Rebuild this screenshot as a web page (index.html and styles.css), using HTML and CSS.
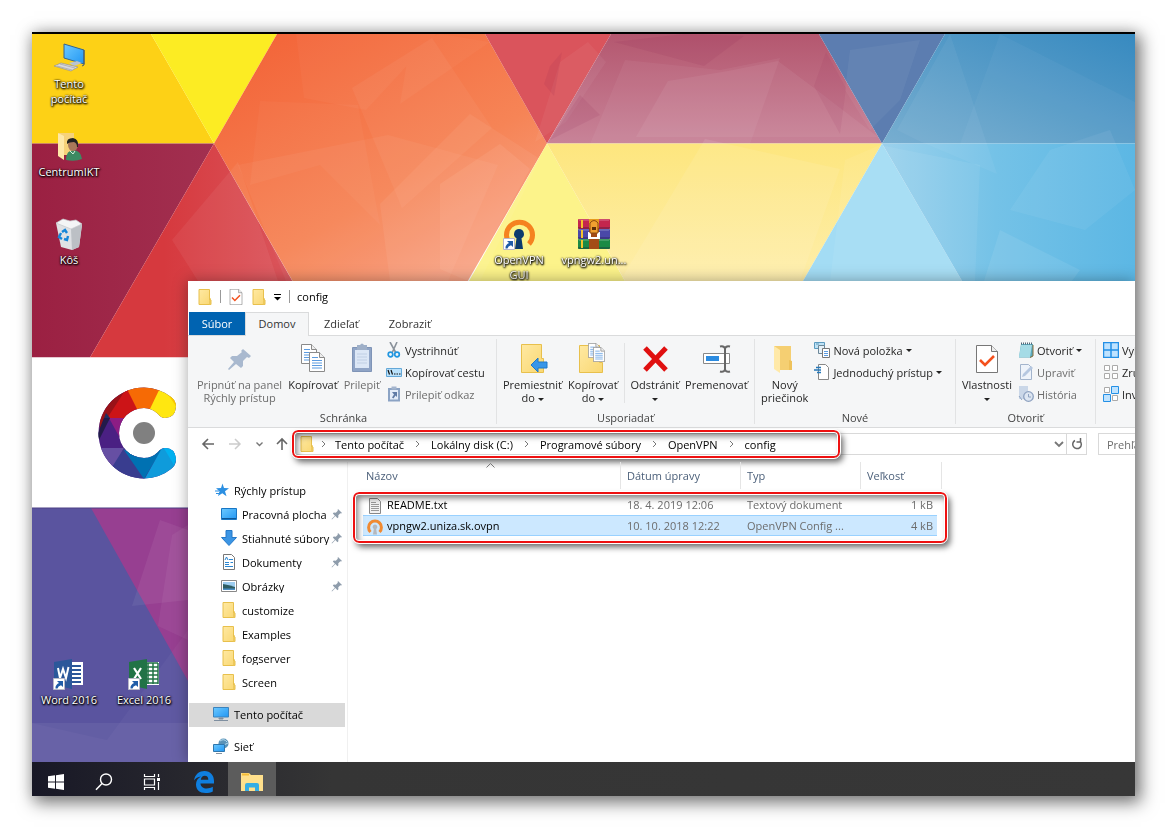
FILE: index.html
```html
<!DOCTYPE html>
<html lang="sk">
<head>
  <meta charset="UTF-8" />
  <meta name="viewport" content="width=device-width, initial-scale=1.0"/>
  <title>config</title>
  <link rel="stylesheet" href="styles.css">
</head>
<body>
  <svg class="sprite" aria-hidden="true">
    <defs>
      <linearGradient id="gFolder" x1="0" y1="0" x2="1" y2="1">
        <stop offset="0" stop-color="#ffe9a2"/><stop offset="1" stop-color="#f9d772"/>
      </linearGradient>
      <linearGradient id="gScreen" x1="0" y1="0" x2="1" y2="1">
        <stop offset="0" stop-color="#6cc9ff"/><stop offset="1" stop-color="#2196f3"/>
      </linearGradient>
    </defs>
    <symbol id="folder" viewBox="0 0 16 16">
      <path d="M2 .5h10.500v10.500h1.500v4.500H2z" fill="url(#gFolder)" stroke="#e8c04c"/>
      <path d="M12.500 15.500v-4l1-2v6z" fill="#fbe08a" stroke="#e8c04c" stroke-width=".7"/>
    </symbol>
    <symbol id="pin" viewBox="0 0 12 12">
      <path d="M7 1l4 4-1 .5-.7-.2-2 2 .1 2-1 1-2-2.200L1 11.500l-.4-.4 3.300-3.400L1.800 5.600l1-1 2 .1 2-2-.2-.8z" fill="#8e9cab"/>
    </symbol>
    <symbol id="page" viewBox="0 0 16 20">
      <path d="M.5.500h10l5 5v14H.5z" fill="#fff" stroke="#8a8a8a"/>
      <path d="M10.500.500v5h5" fill="#eee" stroke="#8a8a8a"/>
      <path d="M3 5.500h6M3 8.500h10M3 11h10M3 13.500h10M3 16h10" stroke="#5b9be0"/>
    </symbol>
    <symbol id="check" viewBox="0 0 22 28">
      <path d="M.5.500h15l6 6v21H.5z" fill="#fff" stroke="#777"/>
      <path d="M15.500.500v6h6" fill="#eee" stroke="#777"/>
      <path d="M4 15l5 5 9-9" fill="none" stroke="#f4511e" stroke-width="2.600"/>
    </symbol>
    <symbol id="shortcut" viewBox="0 0 12 12">
      <path d="M.5.500h11v11H.5z" fill="#fff" stroke="#b8b8c8"/>
      <path d="M4 3h6v6L8 7.200Q5 8 4.500 10.500H2.500Q2 7 6 5z" fill="#1f5ca8"/>
    </symbol>
    <symbol id="vpn" viewBox="0 0 32 32">
      <path d="M7 26A13 13 0 1 1 26 26" fill="none" stroke="#f58220" stroke-width="5"/>
      <path d="M16 11a5 5 0 0 1 2.500 9.300L20 31h-8l1.500-10.700A5 5 0 0 1 16 11z" fill="#0c3c6e"/>
    </symbol>
    <symbol id="pc" viewBox="0 0 16 14">
      <path d="M.5.500h15v9.500H.5z" fill="url(#gScreen)" stroke="#3b83bd"/>
      <path d="M6 11h4v1H6zM1 13.500h14" stroke="#7f8fa0" fill="#7f8fa0"/>
    </symbol>
  </svg>

  <main class="desktop">
    <div class="screen">
      <svg class="wallpaper" viewBox="32 34 1103 728" preserveAspectRatio="xMinYMin slice" aria-hidden="true">
        <defs>
          <linearGradient id="gOrange" x1=".2" y1="0" x2=".8" y2="1">
            <stop offset="0" stop-color="#f3663a"/><stop offset=".5" stop-color="#f68456"/><stop offset="1" stop-color="#f9b09a"/>
          </linearGradient>
          <linearGradient id="gRed" x1="0" x2="1"><stop offset=".3" stop-color="#d6393e"/><stop offset="1" stop-color="#dc5f66"/></linearGradient>
          <linearGradient id="gCrimson" x1="0" x2="1"><stop offset="0" stop-color="#9b2042"/><stop offset="1" stop-color="#a23050"/></linearGradient>
          <linearGradient id="gMauve" x1="0" y1="0" x2="0" y2="1"><stop offset="0" stop-color="#b4576f"/><stop offset="1" stop-color="#c88398"/></linearGradient>
          <linearGradient id="gSky" x1="0" y1="0" x2="1" y2="0"><stop offset="0" stop-color="#9bd1ec"/><stop offset=".45" stop-color="#74c2e7"/><stop offset="1" stop-color="#5cb7e4"/></linearGradient>
          <linearGradient id="gBlue" x1="0" y1="1" x2="1" y2="0"><stop offset="0" stop-color="#78aed0"/><stop offset="1" stop-color="#378ac0"/></linearGradient>
          <linearGradient id="gPale" x1="0" y1="0" x2="0" y2="1"><stop offset="0" stop-color="#fde67e"/><stop offset="1" stop-color="#feeeaa"/></linearGradient>
          <clipPath id="cRing"><path d="M144 387.500A45.500 45.500 0 0 0 144 478.500Q160 478 171 469A12 12 0 0 0 176 459Q175 448 165 448Q161 448 158 452Q152 458 144 458A25 25 0 0 1 144 408Q152 408 158 414Q161 418 165 418Q175 418 176 407A12 12 0 0 0 171 397Q160 388 144 387.500z"/></clipPath>
        </defs>
        <path d="M32 34h119l63 109.500H32z" fill="#fdd116"/>
        <path d="M151 34h126l-63 109.500z" fill="#fcec23"/>
        <path d="M277 34h208l62 109.500L424 357H336L214 143.500z" fill="url(#gOrange)"/>
        <path d="M32 143.500h182L90 357.500H32z" fill="url(#gCrimson)"/>
        <path d="M214 143.500L336 357.500H90z" fill="url(#gRed)"/>
        <path d="M485 34h126l-64 109.500z" fill="#da545c"/>
        <path d="M611 34h208l63 109.500H547z" fill="url(#gMauve)"/>
        <path d="M819 34h126l-63 109.500z" fill="#5c7db0"/>
        <path d="M945 34h190v109.500H882z" fill="url(#gBlue)"/>
        <path d="M547 143.500L625 281H469z" fill="#fcf38a"/>
        <path d="M547 143.500h335L803 281H625z" fill="url(#gPale)"/>
        <path d="M882 143.500L962 281H803z" fill="#a3dcf4"/>
        <path d="M882 143.500h253V281H962z" fill="url(#gSky)"/>
        <!-- translucent facets -->
        <g fill="#fff" opacity=".65">
          <path d="M296 34h140l-70 76-62-12zM440 34l50 8-90 62 10-60z" opacity=".05"/>
          <path d="M260 101l98 4 22 120-60-60-70 20z" opacity=".05"/>
          <path d="M352 88l80-50 60 90-90 80z" opacity=".07"/>
          <path d="M238 165l150-30 110 30-50 116H286z" opacity=".07"/>
          <path d="M380 204l90-90 70 45-60 122h-90z" opacity=".09"/>
          <path d="M172 240l66-78 40 119h-80z" opacity=".09"/>
          <path d="M440 184l60-40 30 25-62 112-28-12z" opacity=".1"/>
          <path d="M560 62l28-20 18 20-40 60-31 20z" opacity=".08"/>
          <path d="M625 60l95 10 60-12-30 86H590z" opacity=".08"/>
          <path d="M668 81l60-10 50-10 40 30 60 46H636z" opacity=".09"/>
          <path d="M850 50l70-10-20 60-30 30-25-40z" opacity=".08"/>
          <path d="M950 34l47 140-80-34-20-10z" opacity=".08"/>
          <path d="M1000 34l135 68v42H960z" opacity=".06"/>
          <path d="M705 139l135 30-40 112H620z" opacity=".13"/>
          <path d="M845 160l35-15 100 20-5 116H830z" opacity=".1"/>
          <path d="M1050 150l60-20 25 60-50 40-75-20z" opacity=".09"/>
          <path d="M1000 230l80 40-8 11h-88z" opacity=".12"/>
        </g>
        <g fill="#8c1f4c">
          <path d="M550 66l12-14-8 44-10-12zM684 34l60 2-40 30-90-24zM580 95l20 20-50 25z" opacity=".1"/>
          <path d="M814 86l12-34 20 36-6 46z" opacity=".08"/>
        </g>
        <path d="M32 357.500h156v150.500H32z" fill="#fff"/>
        <path d="M32 508h156v254H32z" fill="#5a549f"/>
        <path d="M91 508h97v173z" fill="#973f91"/>
        <path d="M160 520l28 10v70l-56 6z" fill="#fff" opacity=".06"/>
        <path d="M172 535l16-10v115l-30-14z" fill="#fff" opacity=".05"/>
        <path d="M32 723l75 17 81-110v132H32z" fill="#fff" opacity=".03"/>
        <path d="M32 723h156v39H32z" fill="#fff" opacity=".06"/>
        <path d="M32 507h156v2H32z" fill="#4b3f86" opacity=".5"/>
        <g clip-path="url(#cRing)">
          <path d="M90 380h100v110H90z" fill="#4a2083"/>
          <path d="M98 385h36l-10 10-24 38z" fill="#991218"/>
          <path d="M106 420l22-34 14 32z" fill="#cc1417"/>
          <path d="M128 391l-2-8h38l-14 28h-12z" fill="#f66a05"/>
          <path d="M161 386l20 6v30h-16l-16-11z" fill="#ffe710"/>
          <path d="M164 389l17-2v26z" fill="#fbc800"/>
          <path d="M109 418h20l-8 22z" fill="#8c1d84"/>
          <path d="M96 440l10-27 4 5-12 20z" fill="#1f3060"/>
          <path d="M96 438l8-20h6l-12 24z" fill="#231a4a"/>
          <path d="M96 448h28l-12 24z" fill="#664fa3"/>
          <path d="M124 448l-20 32h40l10-20z" fill="#393d8f"/>
          <path d="M124 450l20 29 18-30-18 5z" fill="#0071b2"/>
          <path d="M144 480l18-32 20-4v38z" fill="#0f9bdb"/>
          <path d="M162 445l12 20 8-22z" fill="#00b1f0"/>
        </g>
        <circle cx="144" cy="433" r="11" fill="#808080"/>
      </svg>

      <!-- desktop icons -->
      <button class="shortcut pos-pc">
        <svg width="32" height="32" viewBox="0 0 32 32"><path d="M11 2l20 6v14l-20-6z" fill="url(#gScreen)" stroke="#35638c"/><path d="M31 8v15l-2 1" stroke="#4c5968" fill="none"/><path d="M16 21l8-2 5 2-8 3z" fill="#b9c4cf"/><path d="M1 24l7-3 17 4-7 4z" fill="#d8d8dc" stroke="#8b8b95" stroke-width=".6"/><path d="M4 24l15 4M7 22l15 4" stroke="#999" stroke-width=".6"/></svg>
        <span>Tento počítač</span>
      </button>
      <button class="shortcut pos-user">
        <svg width="32" height="32" viewBox="0 0 32 32"><path d="M6 3h15v22H10z" fill="#f6d27a"/><path d="M5 3l6 3v24l-6-4z" fill="#ffe9a8"/><path d="M13 30q0-10 8-10 7 1 8 9-7 3-16 1z" fill="#3c8a62"/><ellipse cx="20" cy="15" rx="5" ry="6" fill="#a9795a"/><path d="M14 14q-1-6 6-6 6 1 5 9h-1q0-4-3-5-5 0-7 2z" fill="#222"/><path d="M17 21l3 3 2-3" stroke="#d8efe2" fill="none"/></svg>
        <span>CentrumIKT</span>
      </button>
      <button class="shortcut pos-bin">
        <svg width="32" height="32" viewBox="0 0 32 32"><path d="M3 5l26 2-3 22-7 3-11-3z" fill="#dfe1e4"/><path d="M18 11l11-5-3 23-7 3z" fill="#bcc0c5"/><path d="M3 5l7-4 7 2 6-1 6 4-11 5z" fill="#f4f5f6" stroke="#c4c7cb" stroke-width=".7"/><path d="M9 14l3-2 2 3M15 18l-1 4-3-1M9 21l-3-2 2-4" stroke="#1585d8" stroke-width="2.400" fill="none"/></svg>
        <span>Kôš</span>
      </button>
      <button class="shortcut pos-vpn">
        <svg width="32" height="32" viewBox="0 0 32 32"><use href="#vpn"/><use href="#shortcut" y="20" width="12" height="12"/></svg>
        <span>OpenVPN GUI</span>
      </button>
      <button class="shortcut pos-rar">
        <svg width="32" height="32" viewBox="0 0 32 32"><rect y="1" width="32" height="10" rx="1" fill="#c4264e"/><rect y="11" width="32" height="10" rx="1" fill="#4a48a8"/><rect y="21" width="32" height="10" rx="1" fill="#1b8a45"/><path d="M1 2h30M1 12h30M1 22h30" stroke="#fff" opacity=".35"/><path d="M0 10h32M0 20h32M0 30h32" stroke="#20143a" opacity=".6"/><path d="M3 2h2v8H3zM3 12h2v8H3zM3 22h2v8H3z" fill="#f5c32c"/><path d="M11 1h10v30H11z" fill="#a34c16"/><path d="M11 1h10v9H11z" fill="#e69a1e"/><path d="M10 14h3v5h6v-5h3v7H10z" fill="#fff"/><path d="M12 5q4-5 8 0v10h-8z" fill="#f0a030" stroke="#8d4c10"/><path d="M14 9h4v3h-4z" fill="#5e2f08"/></svg>
        <span>vpngw2.un...</span>
      </button>
      <button class="shortcut pos-word">
        <svg width="32" height="32" viewBox="0 0 32 32"><path d="M17 4h13v23H17z" fill="#fff"/><path d="M19 8h9M19 12h9M19 16h9M19 20h9M19 24h9" stroke="#2b579a" stroke-width="2"/><path d="M1 4l18-3v30L1 27z" fill="#2b579a"/><path d="M5 10l2 10 3-9 3 9 2.500-11" stroke="#fff" stroke-width="2" fill="none"/><use href="#shortcut" y="20" width="12" height="12"/></svg>
        <span>Word 2016</span>
      </button>
      <button class="shortcut pos-excel">
        <svg width="32" height="32" viewBox="0 0 32 32"><path d="M17 4h14v23H17z" fill="#fff"/><path d="M20 5v21M30 5v21M25 5v21M19 5h11M19 9h11M19 13h11M19 17h11M19 21h11M19 25h11" stroke="#217346" stroke-width="1.500"/><path d="M1 4l18-3v30L1 27z" fill="#217346"/><path d="M6 10l7 11M13 10L6 21" stroke="#fff" stroke-width="2.200"/><use href="#shortcut" y="20" width="12" height="12"/></svg>
        <span>Excel 2016</span>
      </button>

      <section class="window">
        <header class="titlebar">
          <svg width="16" height="16"><use href="#folder"/></svg>
          <i class="bar"></i>
          <svg width="16" height="16"><use href="#check"/></svg>
          <svg width="16" height="16"><use href="#folder"/></svg>
          <svg width="8" height="8" viewBox="0 0 8 8"><path d="M0 1.500h7" stroke="#000"/><path d="M0 4h7L3.500 7.500z"/></svg>
          <i class="bar"></i>
          <h1>config</h1>
        </header>

        <nav class="tabs">
          <button class="tab file">Súbor</button>
          <button class="tab active">Domov</button>
          <button class="tab">Zdieľať</button>
          <button class="tab">Zobraziť</button>
        </nav>

        <div class="ribbon">
          <div class="group clipboard">
            <div class="tools">
              <button class="big" disabled><svg width="32" height="32" viewBox="0 0 32 32"><path d="M19 6l8 7-2 2-2-1-4 4 0 5-2 2-5-4-7 6-1-1 6-7-4-4 2-2 5 0 5-4-1-1z" fill="#a9b9cf"/></svg>Pripnúť na panel<br>Rýchly prístup</button>
              <button class="big"><svg width="32" height="32" viewBox="0 0 32 32"><use href="#page" x="4" y="1" width="16" height="20"/><use href="#page" x="12" y="9" width="16" height="20"/></svg>Kopírovať</button>
              <button class="big" disabled><svg width="32" height="32" viewBox="0 0 32 32"><path d="M6.500 4.500h19v24h-19z" fill="#8fa4c6" stroke="#7f94b7"/><path d="M9 7h14v18H9z" fill="#dce7f6"/><path d="M11 2h3q2-3 4 0h3v5H11z" fill="#9eafc8"/><path d="M11 11h10M11 14h10M11 17h10M11 20h10" stroke="#c0cfe4"/></svg>Prilepiť</button>
              <div class="small-list">
                <button><svg width="16" height="16" viewBox="0 0 16 16"><path d="M4 0l6 11M11 0L6 11" stroke="#8a929b" stroke-width="1.600"/><circle cx="4.500" cy="12.500" r="2.300" fill="none" stroke="#2196e0" stroke-width="1.700"/><circle cx="11" cy="12.500" r="2.300" fill="none" stroke="#2196e0" stroke-width="1.700"/></svg>Vystrihnúť</button>
                <button><svg width="16" height="16" viewBox="0 0 16 16"><path d="M.5 4.500h15v8H.5z" fill="#b9e1fb" stroke="#64a8d8"/><path d="M2 6l1.500 4.500M5 6l1.500 4.500M8 10h1.500M10.500 10H12M13 10h1.500" stroke="#111" stroke-width="1.200"/></svg>Kopírovať cestu</button>
                <button disabled><svg width="16" height="16" viewBox="0 0 16 16"><path d="M2 2h12v13.500H2z" fill="#8ba3c4"/><path d="M4 4h8v9.500H4z" fill="#e3ecf8"/><path d="M5.500.500h5v3h-5z" fill="#a4b5cd"/><path d="M6 6h5v5l-1.500-1.500-2 3-1.500-1 2-3z" fill="#5f7ba5"/></svg>Prilepiť odkaz</button>
              </div>
            </div>
            <h2>Schránka</h2>
          </div>
          <div class="group organize">
            <div class="tools">
              <button class="big"><svg width="32" height="32" viewBox="0 0 32 32"><path d="M4.500 1.500h20v14h2v14h-22z" fill="url(#gFolder)" stroke="#e8c04c"/><path d="M14 22l7-7v4h9v6h-9v4z" fill="#3896e8" stroke="#1f78c9"/></svg>Premiestniť<br>do <i class="arrow"></i></button>
              <button class="big"><svg width="32" height="32" viewBox="0 0 32 32"><path d="M2.500 2.500h20v17h3v10h-23z" fill="url(#gFolder)" stroke="#e8c04c"/><use href="#page" x="11" y="0" width="12" height="15"/><use href="#page" x="16" y="4" width="12" height="15"/></svg>Kopírovať<br>do <i class="arrow"></i></button>
              <i class="divider"></i>
              <button class="big"><svg width="32" height="32" viewBox="0 0 32 32"><path d="M6 5l21 22M27 5L6 27" stroke="#e01010" stroke-width="5"/></svg>Odstrániť<br><i class="arrow"></i></button>
              <button class="big"><svg width="32" height="32" viewBox="0 0 32 32"><path d="M3.500 10.500h26v10h-26z" fill="#fff" stroke="#888"/><path d="M6 13h13v5H6z" fill="#2b8be0"/><path d="M20 3.500q4-1 5 2 1-3 5-2M25 5v22M20 28.500q4 1 5-2 1 3 5 2" stroke="#666" stroke-width="2" fill="none"/></svg>Premenovať</button>
            </div>
            <h2>Usporiadať</h2>
          </div>
          <div class="group new">
            <div class="tools">
              <button class="big"><svg width="32" height="32" viewBox="0 0 32 32"><path d="M5 3h17v24H10z" fill="#f5cf72"/><path d="M5 3l6 4v23l-6-4z" fill="#ffe9a8"/><path d="M20 17l3 1v9h-3z" fill="#eec25c"/></svg>Nový<br>priečinok</button>
              <div class="small-list">
                <button><svg width="16" height="16" viewBox="0 0 16 16"><path d="M.5.500h10v6H.5zM2 2h3" fill="#bfe2f5" stroke="#5b9abf"/><path d="M4.500 3.500h6v8h-6z" fill="#e6f1f8" stroke="#6c8798"/><path d="M8.500 6.500h7v9h-7z" fill="#fff" stroke="#777"/><path d="M10 9.500h4M10 11.500h4M10 13.500h4" stroke="#5b9be0"/></svg>Nová položka <i class="arrow"></i></button>
                <button><svg width="16" height="16" viewBox="0 0 16 16"><path d="M4.500.500h7l3 3v12h-10z" fill="#fff" stroke="#888"/><path d="M2 3.500h5M0 6h7M3 8.500h4" stroke="#2577b8" stroke-width="1.500"/></svg>Jednoduchý prístup <i class="arrow"></i></button>
              </div>
            </div>
            <h2>Nové</h2>
          </div>
          <div class="group open">
            <div class="tools">
              <button class="big"><svg width="32" height="32" viewBox="0 0 32 32"><use href="#check" x="5" y="2" width="22" height="28"/></svg>Vlastnosti<br><i class="arrow"></i></button>
              <div class="small-list">
                <button><svg width="16" height="16" viewBox="0 0 16 16"><path d="M3 2h12v12l-2 1.500H1z" fill="#5aa9bd"/><path d="M3 3h11l-2 12H1z" fill="#a5dbe6"/><path d="M3 1.500h12" stroke="#567" stroke-dasharray="1 1" stroke-width="2"/><path d="M15 3v11l-3 1.500" stroke="#8a6d3b" fill="none"/></svg>Otvoriť <i class="arrow"></i></button>
                <button disabled><svg width="16" height="16" viewBox="0 0 16 16"><path d="M2.500.500h8l3 3v12h-11z" fill="#eef3fa" stroke="#a3b4cc"/><path d="M4 13l1-3 8-8 2 2-8 8z" fill="#b5c7e0"/></svg>Upraviť</button>
                <button disabled><svg width="16" height="16" viewBox="0 0 16 16"><path d="M1 0h9v13H1z" fill="#cad7e8"/><circle cx="10.500" cy="10.500" r="4.800" fill="#dde6f2" stroke="#8ea2c0" stroke-width="1.300"/><path d="M10.500 8v3h2.500M1 10l3 4" stroke="#8ea2c0" fill="none"/></svg>História</button>
              </div>
            </div>
            <h2>Otvoriť</h2>
          </div>
          <div class="group select">
            <div class="tools">
              <div class="small-list">
                <button><svg width="16" height="16" viewBox="0 0 16 16"><path d="M.5.500h15v15H.5zM8 1v14M1 8h14" fill="#bfe3ff" stroke="#2490e6" stroke-width="1.500"/></svg>Vybrať všetko</button>
                <button><svg width="16" height="16" viewBox="0 0 16 16"><path d="M1.500 1.500h5v5h-5zM9.500 1.500h5v5h-5zM1.500 9.500h5v5h-5zM9.500 9.500h5v5h-5z" fill="#fff" stroke="#aaa"/></svg>Zrušiť výber</button>
                <button><svg width="16" height="16" viewBox="0 0 16 16"><path d="M1.500 1.500h5v5h-5zM9.500 9.500h5v5h-5z" fill="#fff" stroke="#aaa"/><path d="M8.500.500h7v7h-7zM.5 8.500h7v7h-7z" fill="#bfe3ff" stroke="#2490e6"/></svg>Invertovať výber</button>
              </div>
            </div>
          </div>
        </div>

        <div class="address-row">
          <div class="history">
            <button aria-label="Späť"><svg width="14" height="14" viewBox="0 0 14 14"><path d="M13 7H2M7 2L2 7l5 5" fill="none" stroke="#666" stroke-width="1.600"/></svg></button>
            <button aria-label="Dopredu" disabled><svg width="14" height="14" viewBox="0 0 14 14"><path d="M1 7h11M7 2l5 5-5 5" fill="none" stroke="#ccc" stroke-width="1.500"/></svg></button>
            <button aria-label="História"><svg width="7" height="14" viewBox="0 0 7 14"><path d="M.5 5.500l3 3 3-3" fill="none" stroke="#777" stroke-width="1.400"/></svg></button>
            <button aria-label="Nahor"><svg width="12" height="14" viewBox="0 0 12 14"><path d="M6 13V2M1 7l5-5 5 5" fill="none" stroke="#666" stroke-width="1.600"/></svg></button>
          </div>
          <div class="address">
            <div class="crumbs marked">
              <svg width="16" height="16"><use href="#folder"/></svg>
              <svg class="sep first" viewBox="0 0 5 8"><path d="M1 1l3 3-3 3"/></svg>
              <a href="#">Tento počítač</a>
              <svg class="sep" viewBox="0 0 5 8"><path d="M1 1l3 3-3 3"/></svg>
              <a href="#">Lokálny disk (C:)</a>
              <svg class="sep" viewBox="0 0 5 8"><path d="M1 1l3 3-3 3"/></svg>
              <a href="#">Programové súbory</a>
              <svg class="sep" viewBox="0 0 5 8"><path d="M1 1l3 3-3 3"/></svg>
              <a href="#">OpenVPN</a>
              <svg class="sep" viewBox="0 0 5 8"><path d="M1 1l3 3-3 3"/></svg>
              <a href="#">config</a>
            </div>
            <button class="drop" aria-label="Predchádzajúce umiestnenia"><svg width="10" height="8" viewBox="0 0 10 8"><path d="M1 2l4 4 4-4" fill="none" stroke="#777" stroke-width="1.800"/></svg></button>
            <button class="refresh" aria-label="Obnoviť"><svg width="12" height="12" viewBox="0 0 12 12"><path d="M9 3.200A4.300 4.300 0 1 1 4 2.500M9.500 0v4H5.500" fill="none" stroke="#666" stroke-width="1.500"/></svg></button>
          </div>
          <input class="search" type="search" aria-label="Prehľadávať" placeholder="Prehľadávať: config" />
        </div>

        <div class="content">
          <nav class="tree">
            <a href="#" class="root"><svg width="16" height="14" viewBox="0 0 16 14"><path d="M9.500.500l1.500 4.500 5 .2-4 3 1.500 5-4.200-2.900L5 13l1.500-4.800L3 5.300l5-.3z" fill="#2b8fe2"/><path d="M2 8h4M3 10.500h3" stroke="#2b8fe2"/></svg>Rýchly prístup</a>
            <a href="#"><svg width="16" height="16" viewBox="0 0 16 16"><path d="M.5 2.500h15v11H.5z" fill="url(#gScreen)" stroke="#1876c4"/><path d="M1 12.500h14" stroke="#0c5596"/></svg><span>Pracovná plocha</span><svg class="pin"><use href="#pin"/></svg></a>
            <a href="#"><svg width="16" height="16" viewBox="0 0 16 16"><path d="M5 .500h6v7h4.500L8 15.500.500 7.500H5z" fill="#3b95e4" stroke="#2478c8"/></svg><span>Stiahnuté súbory</span><svg class="pin"><use href="#pin"/></svg></a>
            <a href="#"><svg width="16" height="16" viewBox="0 0 16 16"><path d="M2.500.500h8l3 3v12h-11z" fill="#fff" stroke="#777"/><path d="M4 6l1.500-3L7 6M8 5.500h4M4 8.500h4M9.500 8.500H12M4 10.500h4M4 12.500h8" stroke="#2a86d2" fill="none"/></svg><span>Dokumenty</span><svg class="pin"><use href="#pin"/></svg></a>
            <a href="#"><svg width="16" height="16" viewBox="0 0 16 16"><path d="M.5 2.500h15v11H.5z" fill="#fff" stroke="#888"/><path d="M2 4h12v8H2z" fill="#9dcdf0"/><path d="M2 6q6 1 12 3v3H2z" fill="#2e5d62"/><path d="M2 10.500h12V12H2z" fill="#4b8ec4"/></svg><span>Obrázky</span><svg class="pin"><use href="#pin"/></svg></a>
            <a href="#"><svg width="16" height="16"><use href="#folder"/></svg><span>customize</span></a>
            <a href="#"><svg width="16" height="16"><use href="#folder"/></svg><span>Examples</span></a>
            <a href="#"><svg width="16" height="16"><use href="#folder"/></svg><span>fogserver</span></a>
            <a href="#"><svg width="16" height="16"><use href="#folder"/></svg><span>Screen</span></a>
            <a href="#" class="root selected"><svg width="16" height="14"><use href="#pc"/></svg>Tento počítač</a>
            <a href="#" class="root"><svg width="16" height="16" viewBox="0 0 16 16"><circle cx="10.500" cy="5.500" r="5" fill="#5a93b8"/><path d="M7 3q4-3 7 1M6 7q5 1 9-2" stroke="#b9dcef" fill="none"/><path d="M.5 6.500h11v7H.5z" fill="url(#gScreen)" stroke="#2f76ac"/><path d="M3 15.500h6" stroke="#8794a1"/></svg>Sieť</a>
          </nav>

          <div class="files">
            <table>
              <thead>
                <tr>
                  <th class="name">Názov<svg class="sort" width="9" height="5" viewBox="0 0 9 5"><path d="M.5 4.500l4-4 4 4" fill="none" stroke="#777"/></svg></th>
                  <th class="date">Dátum úpravy</th>
                  <th class="type">Typ</th>
                  <th class="size">Veľkosť</th>
                </tr>
              </thead>
              <tbody class="marked">
                <tr>
                  <td><svg width="16" height="16" viewBox="0 0 16 16"><path d="M2.500.500h8l3 3v12h-11z" fill="#f2f2f2" stroke="#888"/><path d="M4 4.500h5M4 6.500h8M4 8.500h8M4 10.500h8M4 12.500h8" stroke="#999"/></svg>README.txt</td>
                  <td>18. 4. 2019 12:06</td>
                  <td>Textový dokument</td>
                  <td>1 kB</td>
                </tr>
                <tr class="selected">
                  <td><svg width="16" height="16" viewBox="0 0 16 16"><path d="M3.500 13A6.400 6.400 0 1 1 12.500 13" fill="none" stroke="#f08a32" stroke-width="3"/><path d="M8 5.500a2.500 2.500 0 0 1 1.200 4.600l.8 5.400H6l.8-5.400A2.500 2.500 0 0 1 8 5.500z" fill="#b5b8bd"/></svg>vpngw2.uniza.sk.ovpn</td>
                  <td>10. 10. 2018 12:22</td>
                  <td>OpenVPN Config ...</td>
                  <td>4 kB</td>
                </tr>
              </tbody>
            </table>
          </div>
        </div>
      </section>
    </div>

    <footer class="taskbar">
      <button aria-label="Štart"><svg width="16" height="16" viewBox="0 0 16 16"><path d="M0 2.300L7 1.300v6.300H0zM8 1.200L16 0v7.600H8zM0 8.500h7v6.200L0 13.700zM8 8.500h8V16L8 14.800z" fill="#fff"/></svg></button>
      <button aria-label="Hľadať"><svg width="18" height="18" viewBox="0 0 18 18"><circle cx="11" cy="6.500" r="5.500" fill="none" stroke="#fff" stroke-width="1.400"/><path d="M7 10.500L1 16.800" stroke="#fff" stroke-width="1.500"/></svg></button>
      <button aria-label="Zobrazenie úloh"><svg width="18" height="16" viewBox="0 0 18 16"><path d="M1.500 0v2.500h10V0M1.500 16v-2.500h10V16M1.500 5h10v6h-10zM15.500 0v3M15.500 8v8" fill="none" stroke="#fff" stroke-width="1.200"/><path d="M14 4h3v3h-3z" fill="#fff"/></svg></button>
      <button class="edge" aria-label="Microsoft Edge"><svg width="22" height="24" viewBox="0 0 22 24"><path d="M1 10.500C2 4 6.500 1 11.500 1 17.500 1 21 5.500 21 11v2.500H7.500c.2 3.500 3 5 6 5 2.300 0 4.500-.6 6.300-1.700v4.700c-2 1-4.500 1.500-7.300 1.500C6.500 23 3 19.500 3 14.500c0-3.500 1.800-6.500 5-8C5 7 2.500 8.300 1 10.500zM7.800 9.700h7.500c0-2.500-1.200-4-3.500-4-2.200 0-3.600 1.600-4 4z" fill="#0f7fe0" fill-rule="evenodd"/></svg></button>
      <button class="running" aria-label="Prieskumník"><svg width="22" height="20" viewBox="0 0 22 20"><path d="M0 1h8l2 2h12v16H0z" fill="#ffe08c"/><path d="M1 1.500h7v2H1z" fill="#f4bc38"/><path d="M4 19v-6q0-2 2-2h10q2 0 2 2v6h-4v-3.500H8V19z" fill="#35aee4"/></svg></button>
    </footer>
  </main>
</body>
</html>
```

FILE: styles.css
```css
:root {
  --line: #dadbdc;
  --ribbon: #f5f6f7;
  --muted: #6d6d6d;
  --red: #ee1111;
}
* {
  box-sizing: border-box;
}
body {
  margin: 0;
  padding: 32px;
  background: #fff;
  font-family: 'Segoe UI', 'Open Sans', sans-serif;
  font-size: 11px;
  line-height: 13px;
  color: #000;
}
button, input {
  font: inherit;
  color: inherit;
  border: 0;
  background: none;
  padding: 0;
  margin: 0;
}
a {
  color: inherit;
  text-decoration: none;
}
h1, h2 {
  margin: 0;
  font-size: 11px;
  font-weight: normal;
}
svg {
  flex-shrink: 0;
}
.sprite {
  position: absolute;
  width: 0;
  height: 0;
}
.desktop {
  display: flex;
  flex-direction: column;
  min-height: calc(100vh - 64px);
  border-top: 2px solid #000;
  box-shadow: 4px 5px 16px 2px rgba(0, 0, 0, 0.5), 0 0 14px rgba(0, 0, 0, 0.12);
}
.screen {
  position: relative;
  flex: 1;
  overflow: hidden;
}
.wallpaper {
  position: absolute;
  inset: 0;
  width: 100%;
  height: 100%;
}

/* desktop icons */
.shortcut {
  position: absolute;
  display: flex;
  flex-direction: column;
  align-items: center;
  gap: 2px;
  width: 74px;
  line-height: 15px;
  color: #fff;
  text-shadow: 0 1px 2px #000, 1px 1px 2px #000, 0 0 2px #000;
}
.shortcut span {
  max-width: 66px;
}
.pos-pc { left: 0; top: 8px; }
.pos-user { left: 0; top: 96px; }
.pos-bin { left: 0; top: 184px; }
.pos-vpn { left: 450px; top: 184px; }
.pos-rar { left: 525px; top: 184px; }
.pos-word { left: 0; top: 624px; }
.pos-excel { left: 75px; top: 624px; }

/* explorer window */
.window {
  position: absolute;
  left: 156px;
  top: 247px;
  right: 0;
  bottom: 0;
  display: flex;
  flex-direction: column;
  overflow: hidden;
  background: #fff;
  box-shadow: 0 0 14px rgba(0, 0, 0, 0.35);
}
.titlebar {
  display: flex;
  align-items: center;
  gap: 7px;
  height: 31px;
  padding-left: 9px;
}
.bar {
  width: 1px;
  height: 13px;
  background: #999;
}
.tabs {
  display: flex;
  height: 23px;
}
.tab {
  padding: 0 15px 2px;
  height: 24px;
  color: #333;
}
.tab.file {
  width: 56px;
  margin-left: 1px;
  padding: 0 0 2px;
  background: #0063b1;
  color: #fff;
}
.tab.active {
  z-index: 1;
  width: 64px;
  padding: 0 0 2px;
  background: var(--ribbon);
  border: 1px solid var(--line);
  border-bottom: 0;
}
.ribbon {
  display: flex;
  height: 93px;
  background: var(--ribbon);
  border-top: 1px solid var(--line);
  border-bottom: 1px solid var(--line);
  color: #262626;
}
.group {
  display: flex;
  flex-direction: column;
  flex-shrink: 0;
  justify-content: space-between;
  margin: 3px 0;
  padding: 0 6px;
  border-right: 1px solid #e2e3e4;
}
.group h2 {
  text-align: center;
  color: #444;
}
.clipboard { width: 309px; padding-left: 9px; }
.organize { width: 258px; }
.new { width: 201px; }
.open { width: 140px; }
.select { border: 0; padding-left: 7px; }
.tools {
  display: flex;
  gap: 6px;
}
.big {
  padding-top: 4px;
  text-align: center;
  white-space: nowrap;
  align-self: flex-start;
}
.big svg {
  display: block;
  margin: 0 auto 3px;
}
button:disabled {
  color: var(--muted);
}
.small-list button {
  display: flex;
  align-items: center;
  gap: 3px;
  height: 22px;
  white-space: nowrap;
}
.arrow {
  display: inline-block;
  vertical-align: middle;
  border: 3px solid transparent;
  border-top-color: #222;
  border-bottom: 0;
}
.divider {
  width: 1px;
  height: 60px;
  margin: 4px 0;
  background: #e2e3e4;
}

/* address row */
.address-row {
  display: flex;
  align-items: center;
  height: 34px;
  padding: 0 0 2px 13px;
}
.history {
  display: flex;
  align-items: center;
  justify-content: space-between;
  width: 87px;
}
.history button, .drop, .refresh {
  display: flex;
  align-items: center;
  justify-content: center;
}
.address {
  display: flex;
  flex: 1;
  height: 22px;
  margin-left: 4px;
  border: 1px solid #d9d9d9;
}
.crumbs {
  display: flex;
  align-items: center;
  width: 546px;
  padding-left: 6px;
}
.sep {
  width: 5px;
  height: 8px;
  margin: 0 11px;
  fill: none;
  stroke: #777;
}
.sep.first {
  margin: 0 9px 0 6px;
}
.drop {
  width: 14px;
  margin-left: auto;
}
.refresh {
  width: 20px;
  border-left: 1px solid #d9d9d9;
}
.search {
  flex: none;
  width: 160px;
  height: 22px;
  margin: 0 -123px 0 11px;
  padding: 0 8px;
  border: 1px solid #d9d9d9;
}
.search::placeholder {
  color: var(--muted);
}

/* red highlight frame */
.marked {
  position: relative;
}
.marked::after {
  content: '';
  position: absolute;
  inset: -4px -1px;
  border: 2px solid var(--red);
  border-radius: 6px;
  outline: 1px solid #fff;
  box-shadow: 3px 4px 6px rgba(0, 0, 0, 0.6), inset 0 0 0 1px #fff, inset 3px 4px 6px rgba(0, 0, 0, 0.5);
  pointer-events: none;
}

.content {
  display: flex;
  flex: 1;
}
.tree {
  width: 160px;
  padding: 17px 2px 0 1px;
  border-right: 1px solid #f0f0f0;
}
.tree a {
  display: flex;
  align-items: center;
  gap: 5px;
  height: 24px;
  padding: 0 2px 2px 32px;
}
.tree a.root {
  padding-left: 24px;
}
.tree a + .root {
  margin-top: 8px;
}
.tree .selected {
  background: #d9d9d9;
}
.tree span {
  flex: 1;
  overflow: hidden;
  white-space: nowrap;
}
.tree .pin {
  width: 12px;
  height: 12px;
  margin-left: -4px;
}
.files {
  padding-left: 15px;
}
table {
  width: 574px;
  table-layout: fixed;
  border-collapse: separate;
  border-spacing: 0;
}
th {
  position: relative;
  height: 27px;
  padding: 0 6px;
  border-right: 1px solid #e5e5e5;
  color: #4c607a;
  font-weight: normal;
  text-align: left;
}
th:last-child {
  border-right: 0;
  box-shadow: 4px 0 #fff, 5px 0 #e5e5e5;
}
thead::after {
  content: '';
  display: block;
  height: 5px;
}
.sort {
  position: absolute;
  left: 123px;
  top: 1px;
}
.name { width: 258px; padding-left: 3px; }
.date { width: 120px; }
.type { width: 120px; }
td {
  height: 21px;
  padding: 0 6px;
  border: 1px solid transparent;
  border-width: 1px 0;
  color: var(--muted);
  white-space: nowrap;
}
td:first-child {
  padding-left: 4px;
  color: #000;
}
td:last-child {
  padding-right: 4px;
  text-align: right;
}
td svg {
  margin: -3px 4px -3px 0;
  vertical-align: middle;
}
.selected td {
  background: #cce8ff;
  border-color: #99d1ff;
}
tbody.marked::after {
  inset: -2px -10px -7px;
}

.taskbar {
  display: flex;
  height: 34px;
  background: linear-gradient(to right, #181826, #353535 300px, #373737);
}
.taskbar button {
  display: flex;
  align-items: center;
  justify-content: center;
  width: 48px;
  padding-top: 5px;
}
.taskbar .edge {
  margin-left: 4px;
}
.taskbar .running {
  background: #5c5c5c;
}
```
